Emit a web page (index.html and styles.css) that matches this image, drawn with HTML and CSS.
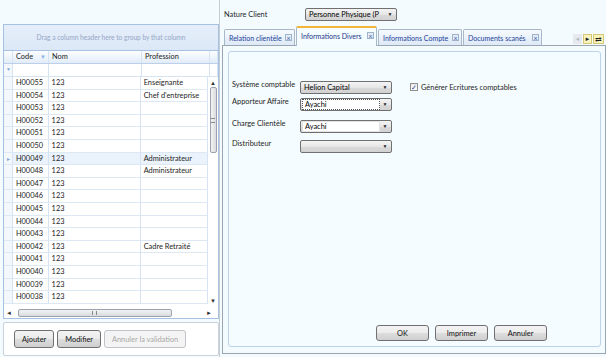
FILE: index.html
```html
<!DOCTYPE html>
<html>
<head>
<title>Fiche Client</title>
<link rel="stylesheet" href="styles.css">
</head>
<body>
<div class="app">
    <div class="left">
        <div class="grid">
            <div class="group-panel">Drag a column header here to group by that column</div>
            <div class="grid-head">
                <div class="cell ind"></div>
                <div class="cell code"><span class="head-text">Code</span><span class="sort">&#9660;</span></div>
                <div class="cell nom">Nom</div>
                <div class="cell prof">Profession</div>
                <div class="cell fill"></div>
            </div>
            <div class="filter-row">
                <div class="cell ind"><span class="funnel">&#9660;</span></div>
                <div class="cell code"></div>
                <div class="cell nom"></div>
                <div class="cell prof"></div>
                <div class="cell fill"></div>
            </div>
            <div class="grid-body">
                <div class="rows">
                    <div class="row"><div class="cell ind"></div><div class="cell code">H00055</div><div class="cell nom">123</div><div class="cell prof">Enseignante</div></div>
                    <div class="row"><div class="cell ind"></div><div class="cell code">H00054</div><div class="cell nom">123</div><div class="cell prof">Chef d'entreprise</div></div>
                    <div class="row"><div class="cell ind"></div><div class="cell code">H00053</div><div class="cell nom">123</div><div class="cell prof"></div></div>
                    <div class="row"><div class="cell ind"></div><div class="cell code">H00052</div><div class="cell nom">123</div><div class="cell prof"></div></div>
                    <div class="row"><div class="cell ind"></div><div class="cell code">H00051</div><div class="cell nom">123</div><div class="cell prof"></div></div>
                    <div class="row"><div class="cell ind"></div><div class="cell code">H00050</div><div class="cell nom">123</div><div class="cell prof"></div></div>
                    <div class="row current"><div class="cell ind"><span class="arrow">&#9658;</span></div><div class="cell code">H00049</div><div class="cell nom">123</div><div class="cell prof">Administrateur</div></div>
                    <div class="row"><div class="cell ind"></div><div class="cell code">H00048</div><div class="cell nom">123</div><div class="cell prof">Administrateur</div></div>
                    <div class="row"><div class="cell ind"></div><div class="cell code">H00047</div><div class="cell nom">123</div><div class="cell prof"></div></div>
                    <div class="row"><div class="cell ind"></div><div class="cell code">H00046</div><div class="cell nom">123</div><div class="cell prof"></div></div>
                    <div class="row"><div class="cell ind"></div><div class="cell code">H00045</div><div class="cell nom">123</div><div class="cell prof"></div></div>
                    <div class="row"><div class="cell ind"></div><div class="cell code">H00044</div><div class="cell nom">123</div><div class="cell prof"></div></div>
                    <div class="row"><div class="cell ind"></div><div class="cell code">H00043</div><div class="cell nom">123</div><div class="cell prof"></div></div>
                    <div class="row"><div class="cell ind"></div><div class="cell code">H00042</div><div class="cell nom">123</div><div class="cell prof">Cadre Retraité</div></div>
                    <div class="row"><div class="cell ind"></div><div class="cell code">H00041</div><div class="cell nom">123</div><div class="cell prof"></div></div>
                    <div class="row"><div class="cell ind"></div><div class="cell code">H00040</div><div class="cell nom">123</div><div class="cell prof"></div></div>
                    <div class="row"><div class="cell ind"></div><div class="cell code">H00039</div><div class="cell nom">123</div><div class="cell prof"></div></div>
                    <div class="row"><div class="cell ind"></div><div class="cell code">H00038</div><div class="cell nom">123</div><div class="cell prof"></div></div>
                </div>
                <div class="vscroll">
                    <span class="sb-arrow">&#9650;</span>
                    <div class="vthumb"><span class="grip-h"></span></div>
                    <div class="vtrack"></div>
                    <span class="sb-arrow">&#9660;</span>
                </div>
            </div>
            <div class="hscroll">
                <span class="sb-arrow">&#9668;</span>
                <div class="hthumb"><span class="grip-v"></span></div>
                <div class="htrack"></div>
                <span class="sb-arrow">&#9658;</span>
            </div>
        </div>
        <div class="actions">
            <button class="btn">Ajouter</button>
            <button class="btn">Modifier</button>
            <button class="btn" disabled>Annuler la validation</button>
        </div>
    </div>

    <div class="right">
        <div class="nature">
            <span class="nature-label">Nature Client</span>
            <div class="combo nature-combo"><span class="combo-text">Personne Physique (P</span><span class="drop">&#9660;</span></div>
        </div>
        <div class="tab-strip">
            <div class="tab t-rel"><span class="tab-text">Relation clientèle</span><span class="close">&#215;</span></div>
            <div class="tab t-div active"><span class="tab-text">Informations Divers</span><span class="close">&#215;</span></div>
            <div class="tab t-cpt"><span class="tab-text">Informations Compte</span><span class="close">&#215;</span></div>
            <div class="tab t-doc"><span class="tab-text">Documents scanés</span><span class="close">&#215;</span></div>
            <div class="tab-nav">
                <span class="nav-btn off">&#9668;</span>
                <span class="nav-btn on">&#9658;</span>
                <span class="nav-btn on list">&#8644;</span>
            </div>
        </div>
        <div class="tab-page">
            <div class="tab-inner">
                <div class="form">
                    <div class="form-row">
                        <span class="form-label">Système comptable</span>
                        <div class="combo"><span class="combo-text">Helion Capital</span><span class="drop">&#9660;</span></div>
                        <label class="check"><span class="box">&#10003;</span>Générer Ecritures comptables</label>
                    </div>
                    <div class="form-row">
                        <span class="form-label">Apporteur Affaire</span>
                        <div class="combo"><span class="combo-text edit focus">Ayachi</span><span class="drop">&#9660;</span></div>
                    </div>
                    <div class="form-row">
                        <span class="form-label">Charge Clientèle</span>
                        <div class="combo"><span class="combo-text edit">Ayachi</span><span class="drop">&#9660;</span></div>
                    </div>
                    <div class="form-row">
                        <span class="form-label">Distributeur</span>
                        <div class="combo"><span class="combo-text"></span><span class="drop">&#9660;</span></div>
                    </div>
                </div>
                <div class="footer">
                    <button class="btn wide">OK</button>
                    <button class="btn wide">Imprimer</button>
                    <button class="btn wide">Annuler</button>
                </div>
            </div>
        </div>
    </div>
</div>
</body>
</html>
```

FILE: styles.css
```css
body {
    margin: 0;
    padding: 0;
    font-family: Lato, "Noto Sans", sans-serif;
    font-size: 7.4px;
    color: #1e1e1e;
    background: #f3fbfe;
}

.app {
    display: flex;
    width: 606px;
    height: 357px;
    overflow: hidden;
}

/* left: grid */
.left {
    width: 220px;
    flex: none;
    padding: 24px 0 0 3px;
    box-sizing: border-box;
    display: flex;
    flex-direction: column;
    border-right: 1px solid #c5ccd4;
}

.grid {
    width: 216px;
    height: 295px;
    box-sizing: border-box;
    border: 1px solid #a6c1e2;
    background: #fff;
    display: flex;
    flex-direction: column;
}

.group-panel {
    height: 25px;
    flex: none;
    line-height: 25px;
    text-align: center;
    font-size: 6.6px;
    color: #94a6c6;
    background: linear-gradient(#e6eefa, #dce8f7);
    border-bottom: 1px solid #a6c1e2;
}

.grid-head, .filter-row, .row {
    display: flex;
    flex: none;
}

.grid-head {
    height: 12px;
    line-height: 12px;
    background: linear-gradient(#fbfdff, #e2ecf8);
    border-bottom: 1px solid #bcd0ea;
}

.cell {
    box-sizing: border-box;
    border-right: 1px solid #d6e3f3;
    padding-left: 3px;
    white-space: nowrap;
    overflow: hidden;
}

.ind { width: 9px; padding: 0; background: #f4f8fd; }
.code { width: 36px; }
.nom { width: 93px; }
.prof { width: 68px; }
.fill { flex: 1; }

.grid-head .ind { background: none; }

.grid-head .code {
    display: flex;
}

.head-text {
    width: 20px;
    overflow: hidden;
}

.sort {
    color: #8fb2de;
    font-size: 6px;
    margin-left: 4px;
}

.filter-row {
    height: 12px;
    border-bottom: 1px solid #d6e3f3;
}

.funnel {
    color: #7fa6d6;
    font-size: 5px;
    padding-left: 2px;
}

.grid-body {
    flex: 1;
    display: flex;
    overflow: hidden;
}

.rows {
    flex: 1;
    overflow: hidden;
}

.row {
    height: 12.6px;
    line-height: 12px;
    box-sizing: border-box;
    border-bottom: 1px solid #dde8f5;
}

.row.current .code,
.row.current .nom,
.row.current .prof { background: #eaf2fc; }

.arrow {
    color: #7fa6d6;
    font-size: 5px;
    padding-left: 2px;
}

.vscroll {
    width: 10px;
    display: flex;
    flex-direction: column;
    align-items: center;
    padding: 2px 0;
    box-sizing: border-box;
}

.sb-arrow {
    font-size: 6px;
    color: #333;
    line-height: 8px;
}

.vthumb {
    width: 7px;
    height: 66px;
    border: 1px solid #9aa3ad;
    border-radius: 2px;
    background: linear-gradient(90deg, #f2f3f4, #d9dcdf);
    display: flex;
    align-items: center;
    justify-content: center;
    box-sizing: border-box;
}

.vtrack, .htrack { flex: 1; }

.grip-h {
    width: 4px;
    height: 3px;
    border-top: 1px solid #888;
    border-bottom: 1px solid #888;
}

.hscroll {
    height: 11px;
    flex: none;
    display: flex;
    align-items: center;
    padding: 0 6px 0 2px;
    background: #fff;
}

.hthumb {
    width: 154px;
    height: 8px;
    margin-left: 6px;
    border: 1px solid #9aa3ad;
    border-radius: 2px;
    background: linear-gradient(#f2f3f4, #d9dcdf);
    display: flex;
    align-items: center;
    justify-content: center;
    box-sizing: border-box;
}

.grip-v {
    width: 3px;
    height: 4px;
    border-left: 1px solid #888;
    border-right: 1px solid #888;
}

.actions {
    margin-top: 3px;
    width: 216px;
    height: 34px;
    border: 1px solid #c9d3dd;
    border-radius: 2px;
    background: #fff;
    display: flex;
    align-items: center;
    gap: 3px;
    padding-left: 10px;
    box-sizing: border-box;
}

.btn {
    font-family: inherit;
    font-size: 7.4px;
    height: 18px;
    padding: 0 7px;
    border: 1px solid #707070;
    border-radius: 3px;
    background: linear-gradient(#f3f3f3, #ebebeb 50%, #dddddd 51%, #cfcfcf);
    color: #111;
}

.btn:disabled {
    border-color: #c0c4c8;
    background: #f4f4f4;
    color: #a8a8a8;
}

/* right: tabs */
.right {
    flex: 1;
    min-width: 0;
    display: flex;
    flex-direction: column;
    padding-left: 2px;
}

.nature {
    display: flex;
    align-items: center;
    height: 14px;
    margin-top: 7px;
    padding-left: 2px;
}

.nature-label { width: 81px; }

.nature-combo { width: 84px; }

.tab-strip {
    display: flex;
    align-items: flex-end;
    height: 23px;
    margin-top: 1px;
    padding-left: 2px;
    position: relative;
    z-index: 1;
}

.tab {
    height: 16px;
    box-sizing: border-box;
    padding: 0 2px 0 4px;
    margin-right: 1px;
    border: 1px solid #a9b8c8;
    border-bottom: none;
    border-radius: 2px 2px 0 0;
    background: linear-gradient(#f7fbff, #dde9f6);
    color: #25429a;
    font-size: 7px;
    white-space: nowrap;
    display: flex;
    align-items: center;
    gap: 3px;
}

.tab-text {
    flex: 1;
    min-width: 0;
    overflow: hidden;
}

.t-rel { width: 71px; }
.t-div { width: 81px; }
.t-cpt { width: 84px; }
.t-doc { width: 79px; }

.tab.active {
    height: 20px;
    border-top: 2px solid #f2b53a;
    background: #f5fcff;
    color: #1c3589;
    margin-bottom: -1px;
    padding-bottom: 3px;
}

.close {
    flex: none;
    width: 7px;
    height: 7px;
    line-height: 6px;
    text-align: center;
    font-size: 7px;
    color: #3a5ca8;
    border: 1px solid #9fb3cc;
    background: #e4ecf6;
    box-sizing: border-box;
}

.tab-nav {
    margin-left: auto;
    margin-right: 2px;
    margin-bottom: 1px;
    display: flex;
    gap: 1px;
}

.nav-btn {
    width: 9px;
    height: 10px;
    line-height: 10px;
    text-align: center;
    font-size: 6px;
    box-sizing: border-box;
}

.nav-btn.off {
    color: #b8bec6;
    background: #e6eaef;
}

.nav-btn.on {
    color: #222;
    background: #fbf3bc;
    border: 1px solid #d6c777;
    line-height: 8px;
}

.nav-btn.list { width: 11px; font-size: 8px; }

.tab-page {
    flex: 1;
    margin-bottom: 3px;
    border: 1px solid #9aa6b2;
    padding: 5px 4px 6px 5px;
}

.tab-inner {
    height: 100%;
    box-sizing: border-box;
    border: 1px solid #bcd3ea;
    border-radius: 3px;
    background: #f5fcff;
    display: flex;
    flex-direction: column;
}

.form {
    flex: 1;
    padding: 28px 0 0 3px;
}

.form-row {
    display: flex;
    align-items: center;
    height: 14px;
}

.form-row:nth-child(1) { margin-bottom: 3px; }
.form-row:nth-child(2) { margin-bottom: 8px; }
.form-row:nth-child(3) { margin-bottom: 6px; }

.form-label {
    width: 68px;
    align-self: flex-start;
    line-height: 10px;
    white-space: nowrap;
}

.combo {
    width: 92px;
    height: 13px;
    box-sizing: border-box;
    border: 1px solid #707070;
    border-radius: 2px;
    background: linear-gradient(#f4f4f4, #e6e6e6 50%, #dadada 51%, #d2d2d2);
    display: flex;
    align-items: center;
    padding: 1px;
}

.combo-text {
    flex: 1;
    min-width: 0;
    height: 9px;
    line-height: 9px;
    padding-left: 2px;
    overflow: hidden;
    white-space: nowrap;
    color: #000;
}

.combo-text.edit {
    background: #fff;
    border: 1px solid #e3e3e3;
}

.combo-text.focus { border: 1px dotted #555; }

.drop {
    width: 10px;
    flex: none;
    text-align: center;
    font-size: 5px;
    color: #222;
}

.check {
    display: flex;
    align-items: center;
    margin-left: 18px;
}

.box {
    width: 8px;
    height: 8px;
    box-sizing: border-box;
    border: 1px solid #8f8f8f;
    background: linear-gradient(#e9e9e9, #fff);
    color: #1d3f8e;
    font-size: 7px;
    line-height: 6px;
    text-align: center;
    margin-right: 3px;
}

.footer {
    display: flex;
    gap: 6px;
    padding: 0 53px 5px 0;
    justify-content: flex-end;
}

.btn.wide {
    width: 53px;
    height: 16px;
}
```
